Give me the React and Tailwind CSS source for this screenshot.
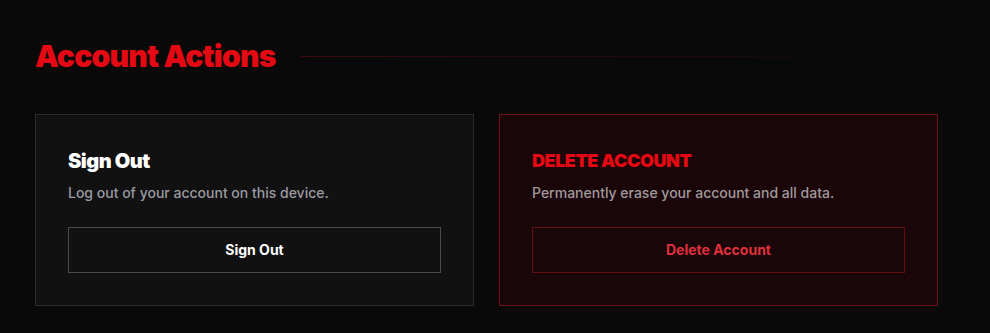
export default function App() {
  return (
    <div
      className="min-h-screen bg-[#0a0909] px-[35px] pt-[38px]"
      style={{ fontFamily: 'Inter, "Noto Sans", sans-serif' }}
    >
      <div className="w-[903px]">
        <div className="flex items-center gap-6 mb-10">
          <h2 className="text-[30px] leading-9 font-black tracking-tight text-[#e50914]">
            Account Actions
          </h2>
          <div className="h-px flex-1 bg-gradient-to-r from-[#3a0a0d] to-transparent" />
        </div>

        <div className="grid grid-cols-2 gap-[25px]">
          <div className="border border-[#2a2a2a] bg-[#111111] p-8">
            <h3 className="text-xl font-black text-white tracking-tight">Sign Out</h3>
            <p className="mt-2 text-sm font-medium text-[#9a9aa2]">Log out of your account on this device.</p>
            <button className="mt-6 w-full h-[46px] border border-[#4a4a4a] text-sm font-bold text-white">
              Sign Out
            </button>
          </div>

          <div className="border border-[#6e1014] bg-[#1a0508] p-8">
            <h3 className="text-lg leading-7 font-black text-[#e50914] tracking-tight">
              DELETE ACCOUNT
            </h3>
            <p className="mt-2 text-sm font-medium text-[#a09a9c]">Permanently erase your account and all data.</p>
            <button className="mt-6 w-full h-[46px] border border-[#5e0f12] text-sm font-bold text-[#e0303c]">
              Delete Account
            </button>
          </div>
        </div>
      </div>
    </div>
  );
}
